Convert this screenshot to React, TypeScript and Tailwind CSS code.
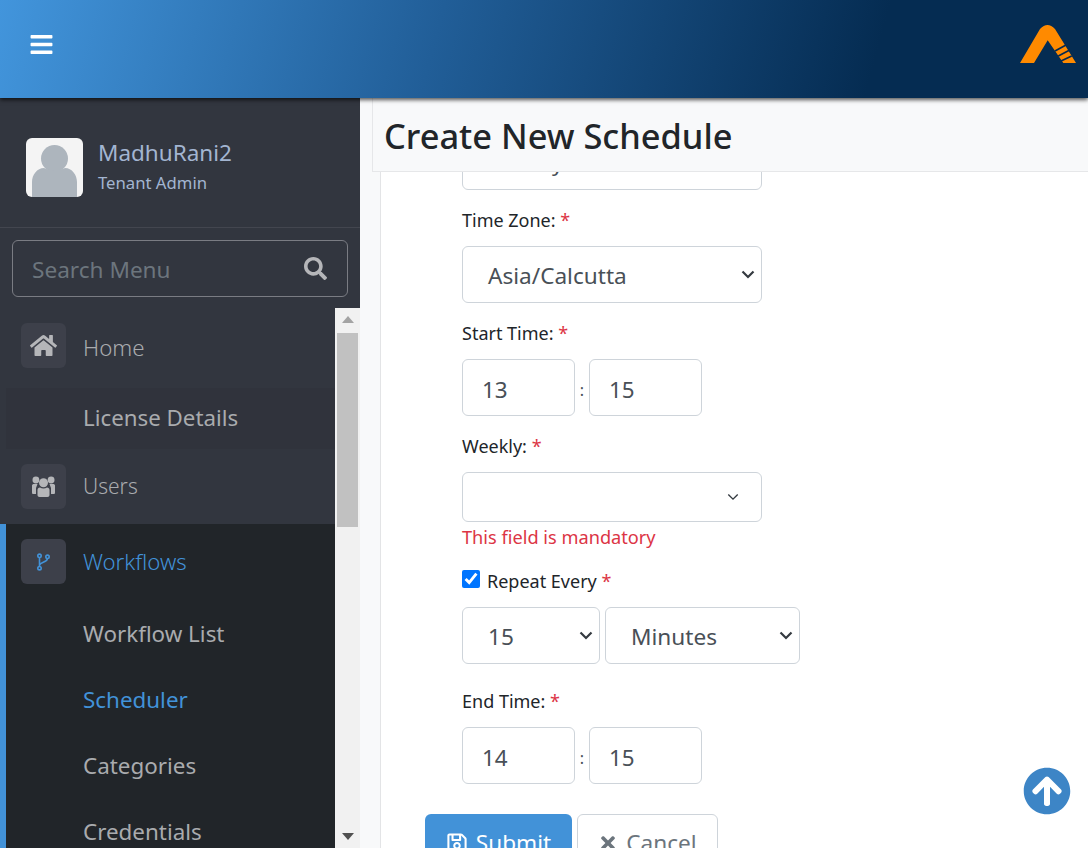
import { ReactNode } from "react";
import { FaArrowCircleUp, FaBars, FaHome, FaRegSave, FaSearch, FaTimes } from "react-icons/fa";

const Req = () => <span className="text-[#dc3545]"> *</span>;

const Chevron = ({ small }: { small?: boolean }) => (
  <svg width={small ? 12 : 14} height={small ? 8 : 9} viewBox="0 0 14 9" fill="none" stroke="#343a40" strokeWidth={small ? 1.6 : 2.2}>
    <path d="M1.5 1.5 7 7l5.5-5.5" />
  </svg>
);

const Select = ({ value, className, small }: { value?: string; className: string; small?: boolean }) => (
  <div className={`flex items-center justify-between rounded-md border border-[#ced4da] bg-white text-[22.6px] text-[#495057] ${className}`}>
    <span className="pt-[3px]">{value}</span>
    <Chevron small={small} />
  </div>
);

const TimeBox = ({ value }: { value: string }) => (
  <input
    readOnly
    defaultValue={value}
    className="h-[57px] w-[113px] rounded-md border border-[#ced4da] bg-white pl-[19px] pt-[3px] text-[22.4px] text-[#495057] outline-none"
  />
);

const TimeRow = ({ hour, minute }: { hour: string; minute: string }) => (
  <div className="flex items-center">
    <TimeBox value={hour} />
    <span className="w-[14px] pt-1 text-center text-[#495057]">:</span>
    <TimeBox value={minute} />
  </div>
);

const Label = ({ children }: { children: ReactNode }) => <div className="h-[24px] text-[18px] leading-[24px] text-[#212529]">{children}</div>;

const IconBox = ({ children, active }: { children: ReactNode; active?: boolean }) => (
  <div className={`flex h-[45px] w-[45px] items-center justify-center rounded-md bg-[#3d404a] ${active ? "text-[#4292d8]" : "text-[#b5b6b9]"}`}>
    {children}
  </div>
);

const UsersIcon = () => (
  <svg width="23" height="21" viewBox="0 0 23 21" fill="currentColor">
    <circle cx="3.9" cy="4" r="3.4" />
    <circle cx="19.1" cy="4" r="3.4" />
    <path d="M0 9.5C0 8.5 1 8 2 8h3.5L4 12v6H1.5C.5 18 0 17.5 0 16.5zM23 9.5C23 8.5 22 8 21 8h-3.5L19 12v6h2.5c1 0 1.5-.5 1.5-1.5z" />
    <circle cx="11.5" cy="6.8" r="4.5" />
    <path d="M5.5 14c0-1.5 1-2.5 2.5-2.5 2 1.2 5 1.2 7 0 1.5 0 2.5 1 2.5 2.5v5c0 1.3-.8 2-2 2H7.500c-1.200 0-2-.7-2-2z" />
  </svg>
);

const BranchIcon = () => (
  <svg width="13" height="18" viewBox="0 0 13 18" fill="none" stroke="currentColor" strokeWidth="1.6">
    <circle cx="2.5" cy="2.8" r="1.7" />
    <circle cx="2.5" cy="15.2" r="1.7" />
    <circle cx="10.5" cy="3.8" r="1.7" />
    <path d="M2.5 4.5v9M10.5 5.5c0 4-8 3.5-8 7" />
  </svg>
);

const SubItem = ({ label, active }: { label: string; active?: boolean }) => (
  <div className={`flex h-[66px] items-center pl-[77px] text-[22.4px] ${active ? "text-[#4292d8]" : "text-[#a9abae]"}`}>{label}</div>
);

const Sidebar = () => (
  <aside className="flex h-full w-[360px] shrink-0 flex-col bg-[#32363f]">
    <div className="flex h-[130px] shrink-0 items-center gap-[15px] border-b border-[#43464f] pl-[26px] pt-[10px]">
      <div className="h-[59px] w-[57px] overflow-hidden rounded-md bg-[#f4f4f4]">
        <svg viewBox="0 0 57 59" className="h-full w-full" fill="#adb5bd">
          <circle cx="28.5" cy="20.5" r="13.5" />
          <path d="M6 59V44c0-7 5-14 12-14 6 3 15 3 21 0 7 0 12 7 12 14v15z" />
        </svg>
      </div>
      <div>
        <div className="text-[22.5px] leading-[30px] text-[#a3b5d1]">MadhuRani2</div>
        <div className="text-[16.7px] leading-[30px] text-[#a3b5d1]">Tenant Admin</div>
      </div>
    </div>
    <div className="shrink-0 px-3 pt-3 pb-[11px]">
      <div className="flex h-[57px] items-center justify-between rounded-md border border-[#7a7c83] pl-[19px] pr-5">
        <span className="pt-[3px] text-[22.6px] text-[#6c757d]">Search Menu</span>
        <FaSearch className="text-[23px] text-[#b5b6b9]" />
      </div>
    </div>
    <div className="flex min-h-0 flex-1">
      <nav className="min-w-0 flex-1 overflow-hidden">
        <div className="flex h-[80px] items-center gap-[17px] pb-[6px] pl-[21px] text-[22.3px] font-light text-[#a9abae]">
          <IconBox><FaHome className="text-[27px]" /></IconBox>
          <span className="pt-[6px]">Home</span>
        </div>
        <div className="ml-[6px] flex h-[61px] items-center bg-[#30333c] pb-[2px] pl-[77px] text-[22.3px] text-[#a9abae]">License Details</div>
        <div className="flex h-[75px] items-center gap-[17px] pl-[21px] text-[21px] font-light text-[#a9abae]">
          <IconBox><UsersIcon /></IconBox>
          <span>Users</span>
        </div>
        <div className="border-l-[6px] border-[#4292d8] bg-[#212529] pb-10">
          <div className="flex h-[77px] items-center gap-[17px] pb-[2px] pl-[15px] text-[22.2px] font-light text-[#4292d8]">
            <IconBox active><BranchIcon /></IconBox>
            <span>Workflows</span>
          </div>
          <SubItem label="Workflow List" />
          <SubItem label="Scheduler" active />
          <SubItem label="Categories" />
          <SubItem label="Credentials" />
        </div>
      </nav>
      <div className="flex w-[25px] shrink-0 flex-col items-center bg-[#f1f1f1]">
        <div className="mt-[8px] h-0 w-0 border-x-[6px] border-b-[7px] border-x-transparent border-b-[#a3a3a3]" />
        <div className="mt-[10px] h-[194px] w-[21px] bg-[#c1c1c1]" />
        <div className="mt-auto mb-[8px] h-0 w-0 border-x-[6px] border-t-[7px] border-x-transparent border-t-[#505050]" />
      </div>
    </div>
  </aside>
);

export default function App() {
  return (
    <div className="flex h-[848px] w-[1088px] flex-col overflow-hidden bg-[#f8f9fa] font-['Noto_Sans',sans-serif]">
      <header className="relative z-20 flex h-[98px] shrink-0 items-center justify-between bg-[linear-gradient(105deg,#4295dc_0%,#215e98_40%,#052c52_80%,#052c52_100%)] pb-[9px] pl-[29px] pr-[12px] shadow-[0_2px_4px_rgba(0,0,0,0.65)]">
        <FaBars className="text-[25px] text-white" />
        <svg width="56" height="38" viewBox="0 0 56 38" className="-mt-[2px]">
          <path fill="#ff8a00" d="M0 38 L20 4 Q27.5 -4 35 4 L56 38 H43.3 L27.7 15.3 L14 38z" />
          <path stroke="#05294f" strokeWidth="1.7" d="M35 26 L46 20 M38.3 31 L49.3 25.3 M41 36 L51.7 31" />
        </svg>
      </header>
      <div className="flex min-h-0 flex-1">
        <Sidebar />
        <main className="relative min-w-0 flex-1 pl-5">
          <div className="absolute top-0 right-0 left-3 z-10 h-[74px] border-b border-l border-[#e6e7e9] bg-[#f8f9fa] pl-[11px] pt-[14px]">
            <h1 className="text-[34.4px] leading-[48px] font-medium text-[#212529]">Create New Schedule</h1>
          </div>
          <div className="h-full overflow-hidden border-l border-[#e3e4e6] bg-white pl-[81px]">
            <div className="mt-[35px]">
              <Select value="Weekly" className="h-[57px] w-[300px] pl-[25px] pr-[14px]" />
              <div className="mt-[18px]"><Label>Time Zone:<Req /></Label></div>
              <div className="mt-[14px]"><Select value="Asia/Calcutta" className="h-[57px] w-[300px] pl-[25px] pr-[6px]" /></div>
              <div className="mt-[18px]"><Label>Start Time:<Req /></Label></div>
              <div className="mt-[14px]"><TimeRow hour="13" minute="15" /></div>
              <div className="mt-[18px]"><Label>Weekly:<Req /></Label></div>
              <div className="mt-[14px]"><Select className="h-[50px] w-[300px] pl-[25px] pr-[22px]" small /></div>
              <div className="mt-[3px] h-[24px] text-[18.2px] leading-[24px] text-[#dc3545]">This field is mandatory</div>
              <div className="mt-[20px] flex items-start">
                <input type="checkbox" readOnly checked className="mt-px mr-[7px] h-[18px] w-[18px] accent-[#0075ff]" />
                <Label>Repeat Every<Req /></Label>
              </div>
              <div className="mt-[14px] flex gap-[5px]">
                <Select value="15" className="h-[57px] w-[138px] pl-[25px] pr-[6px]" />
                <Select value="Minutes" className="h-[57px] w-[195px] pl-[25px] pr-[6px]" />
              </div>
              <div className="mt-[25px]"><Label>End Time:<Req /></Label></div>
              <div className="mt-[14px]"><TimeRow hour="14" minute="15" /></div>
              <div className="-ml-[37px] mt-[30px] flex gap-[5px] text-[22.6px]">
                <button className="flex h-[57px] w-[147px] items-center justify-center gap-2 rounded-md bg-[#4292d8] text-white">
                  <FaRegSave className="text-[22px]" /> Submit
                </button>
                <button className="flex h-[57px] w-[141px] items-center justify-center gap-2 rounded-md border border-[#ced4da] bg-white text-[#6c757d]">
                  <FaTimes className="text-[20px]" /> Cancel
                </button>
              </div>
            </div>
          </div>
          <button className="absolute right-[17px] bottom-[33px] z-10 rounded-full bg-white text-[48px] leading-none text-[#3d85c6]">
            <FaArrowCircleUp />
          </button>
        </main>
      </div>
    </div>
  );
}
